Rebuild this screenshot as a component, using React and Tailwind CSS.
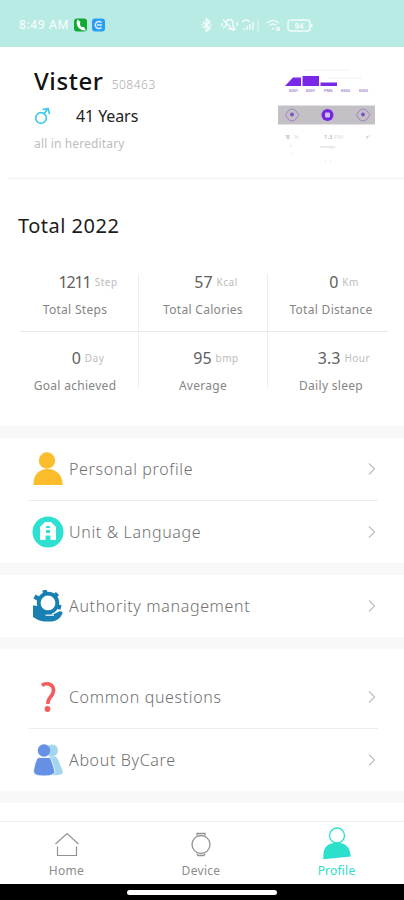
import React from "react";

const stats = [
  { value: "1211", unit: "Step", label: "Total Steps" },
  { value: "57", unit: "Kcal", label: "Total Calories" },
  { value: "0", unit: "Km", label: "Total Distance" },
  { value: "0", unit: "Day", label: "Goal achieved" },
  { value: "95", unit: "bmp", label: "Average" },
  { value: "3.3", unit: "Hour", label: "Daily sleep" },
];

const StatusBar = () => (
  <header className="flex h-[47px] shrink-0 items-center bg-[#b8ebe4] pt-[3px] pl-[19px] text-white">
    <span className="w-[54px] text-[12px] font-medium tracking-[0.600px] whitespace-nowrap opacity-90">8:49 AM</span>
    <svg className="ml-[1px] h-[14px] w-[13px]" viewBox="0 0 13 14">
      <rect width="13" height="13" y=".5" rx="3" fill="#12a934" />
      <path d="M3.500 1.500C1 6 4.500 13 12 12.500L10 9C7 9.500 5 7 6.500 4Z" fill="#fff" />
    </svg>
    <svg className="ml-[5px] h-[14px] w-[13px]" viewBox="0 0 13 14">
      <rect width="13" height="13" y=".5" rx="3" fill="#2c9cf5" />
      <path d="M9.500 4.500A3.600 3.600 0 1 0 9.500 9.500M5 7H10" stroke="#d8efff" strokeWidth="1.500" fill="none" />
    </svg>
    <svg className="ml-[95px] h-[16px] w-[114px] opacity-80" viewBox="0 0 114 16" fill="none" stroke="#fff" strokeWidth="1.500">
      <path d="M3 5L10 11L6.500 14V2L10 5L3 11M1.500 8H2.500M10.500 8H11.500" strokeWidth="1.800" />
      <path d="M23 11L26 9V6Q26 3 29 2.500Q33 2.500 33 6V9L35 12H28M23 2.500L34 14M22 6V9M37 5V9" />
      <path d="M42 5Q46 1 50 5M44 13V11M47 13V9M50 13V7M53 13V5" />
      <path d="M58 2V14" strokeWidth=".8" />
      <path d="M67 6Q73 1 79 6M69.500 8.500Q73 5.500 76.500 8.500M72 11L73 12L74 11M77 10V14M79 10V14" />
      <rect x="88" y="3" width="22" height="11" rx="3" />
      <path d="M111.500 7V10" strokeWidth="2" />
      <text x="99" y="11.500" fill="#fff" stroke="none" textAnchor="middle" className="text-[8px] font-bold">94</text>
    </svg>
  </header>
);

// Round thumbnail with a sleep chart and a row of watch controls
const Avatar = () => (
  <svg className="h-[112px] w-[100px]" viewBox="276 57 100 112">
    <path d="M305 70H350M328 78H362" stroke="#f1f0f2" />
    <path d="M285 86L293 77.500H301V86ZM302.500 76H319V86H302.500ZM320.500 82.500H337V86H320.500Z" fill="#7928e8" />
    <g fill="#a98cce" className="text-[4px] font-bold">
      <text x="289" y="92">6001</text>
      <text x="306" y="92">6001</text>
      <text x="324" y="92">PM6</text>
      <text x="341" y="92">6002</text>
      <text x="359" y="92">6003</text>
    </g>
    <rect x="278" y="105.500" width="97" height="19" fill="#c3c1c5" />
    <g fill="none" stroke="#9b80c4" strokeWidth=".9">
      <path d="M285.500 115L288 111Q292 107 296 111L299 115L296 119Q292 123 288 119Z" />
      <path d="M356.500 115L359 111Q363 107 367 111L370 115L367 119Q363 123 359 119Z" />
    </g>
    <circle cx="292" cy="114.500" r="2" fill="#8055bd" />
    <circle cx="363" cy="114.500" r="2" fill="#8055bd" />
    <circle cx="327.500" cy="115" r="6" fill="#7426e3" />
    <rect x="325" y="112.500" width="5" height="5" rx="1" fill="#d2c0ec" />
    <g fill="#aaa" className="text-[6px]">
      <text x="285" y="139">'8</text>
      <text x="294" y="139" fill="#ddd">%</text>
      <text x="324" y="139">1.3</text>
      <text x="334" y="139" fill="#ddd">PM</text>
      <text x="366" y="139">r'</text>
    </g>
    <text x="320" y="148" fill="#ccc" className="text-[4px]">average</text>
    <path d="M291 145V147M292 153V154M325 161H326M330 161H331" stroke="#ddd" />
  </svg>
);

const Stat = ({ value, unit, label }) => (
  <div className="flex flex-col items-center">
    <div className="flex h-[24px] items-center gap-[4px] pl-[26px]">
      <span className={`text-[16px] text-[#606060] ${value.length > 3 ? "tracking-[-1.100px]" : ""}`}>{value}</span>
      <span className="text-[10px] tracking-[0.500px] text-[#bcbcbc]">{unit}</span>
    </div>
    <span className="mt-[7px] text-[12px] leading-[18px] tracking-[0.300px] whitespace-nowrap text-[#858585]">{label}</span>
  </div>
);

const Row = ({ icon, label }) => (
  <div className="flex h-[62px] shrink-0 items-center pr-[28px] pl-[32px]">
    <span className="flex w-[37px] shrink-0">{icon}</span>
    <span className="text-[16px] font-light tracking-[0.650px] whitespace-nowrap text-[#707070]">{label}</span>
    <svg className="ml-auto h-[12px] w-[8px]" viewBox="0 0 8 12" fill="none" stroke="#bfbfbf" strokeWidth="1.200">
      <path d="M1 .5L6.500 6L1 11.500" />
    </svg>
  </div>
);

const Divider = () => <div className="mr-[26px] ml-[29px] h-px bg-[#ededed]" />;

const Band = () => <div className="h-[12px] bg-[#f8f8f8]" />;

const PersonIcon = () => (
  <svg className="h-[34px] w-[32px]" viewBox="0 0 32 34" fill="#fbbd2c">
    <circle cx="15" cy="8.500" r="8.200" />
    <path d="M1.500 33C1 23 7 17 15.500 17S31 23 30.500 33Z" />
  </svg>
);

const UnitIcon = () => (
  <svg className="h-[32px] w-[32px]" viewBox="0 0 32 32">
    <circle cx="16" cy="16" r="15.500" fill="#2de0d0" />
    <path d="M8 11L13 6H19L24 11V24H18.500V19.500H13.500V24H8Z" fill="#fff" />
    <path d="M14 10H18V12H14ZM14 14H18V17H14Z" fill="#2de0d0" />
  </svg>
);

const AuthorityIcon = () => (
  <svg className="h-[32px] w-[32px]" viewBox="0 0 32 32">
    <g stroke="#1880b2" fill="none">
      <circle cx="16" cy="13" r="9.300" strokeWidth="3.800" />
      <path d="M12.500 0L13.500 4M25.500 3.500L22.500 6.500M25 16.500L29 17.500M2.500 6.500L7 9" strokeWidth="4.500" />
    </g>
    <path d="M1 15.500Q6 15 9.500 18L12.500 20.500H19Q21.500 22.500 19 24.500H21L27 21.500Q31 20.500 30.500 23.500Q27 31 20 31.500H12Q7 31 1 27Z" fill="#1880b2" />
    <path d="M13.500 25.200H22" stroke="#fff" strokeWidth="1.200" />
  </svg>
);

const QuestionIcon = () => (
  <svg className="h-[32px] w-[32px]" viewBox="0 0 32 32">
    <path d="M10 4.500Q13 2 17 3Q23 5 21 12C19 17 15.500 17 16 23" fill="none" stroke="#f25c5c" strokeWidth="3.600" />
    <circle cx="15.500" cy="28" r="2.900" fill="#f25c5c" />
  </svg>
);

const AboutIcon = () => (
  <svg className="h-[34px] w-[32px]" viewBox="0 0 32 34">
    <circle cx="20" cy="7.500" r="6" fill="#a3d5ec" />
    <path d="M17 13.500H24Q27 17 28 22Q32 29 30 31Q26 33 19 32Z" fill="#a3d5ec" />
    <path d="M6 14.500H18Q20 17 23 29Q22 33 12 33Q1 33 1.500 28Q3 18 6 14.500Z" fill="#6590e6" stroke="#fff" strokeWidth=".8" />
    <circle cx="12" cy="7.500" r="6.200" fill="#6590e6" />
  </svg>
);

const App = () => {
  return (
    <div className="flex h-[900px] w-[404px] flex-col overflow-hidden bg-white font-['Noto_Sans',sans-serif]">
      <StatusBar />

      <section className="flex h-[130px] shrink-0 justify-between pr-[28px] pl-[34px]">
        <div className="flex flex-col pt-[15px]">
          <div className="flex h-[38px] items-center gap-[8px]">
            <h1 className="text-[24px] font-medium tracking-[0.600px] text-[#111]">Vister</h1>
            <span className="pt-[8px] text-[12px] font-light tracking-[0.500px] text-[#adadad]">508463</span>
          </div>
          <div className="flex h-[32px] items-center">
            <svg className="h-[18px] w-[18px]" viewBox="0 0 18 18" fill="none" stroke="#3acbea" strokeWidth="1.700">
              <circle cx="7" cy="11" r="5.300" />
              <path d="M10 7L13 2.500M8.500 2.500L14 1.500L15.500 7" />
            </svg>
            <span className="ml-[24px] text-[16px] tracking-[-0.100px] text-[#222]">41 Years</span>
          </div>
          <span className="text-[12px] leading-[24px] tracking-[0.150px] text-[#bdbdbd]">all in hereditary</span>
        </div>
        <div className="pt-[10px]">
          <Avatar />
        </div>
      </section>
      <div className="ml-[8px] h-[3px] shrink-0 bg-[#f9f9f9]" />

      <section className="h-[246px] shrink-0 pt-[31px]">
        <h2 className="pl-[18px] text-[20px] leading-[30px] tracking-[0.500px] text-[#1c1c1c]">Total 2022</h2>
        <div className="mt-[33px] mr-[16px] ml-[20px] grid grid-cols-[118px_1px_128px_1px_120px]">
          <div className="-mt-[4px] h-[61px] pr-[8px]">
            <Stat {...stats[0]} />
          </div>
          <div className="row-span-3 h-[115px] bg-[#eee]" />
          <div className="-mt-[4px]">
            <Stat {...stats[1]} />
          </div>
          <div className="row-span-3 h-[115px] bg-[#eee]" />
          <div className="-mt-[4px] pl-[6px]">
            <Stat {...stats[2]} />
          </div>
          <div className="h-px bg-[#eaeaea]" />
          <div className="h-px bg-[#eaeaea]" />
          <div className="h-px bg-[#eaeaea]" />
          <div className="pt-[14px] pr-[8px]">
            <Stat {...stats[3]} />
          </div>
          <div className="pt-[14px]">
            <Stat {...stats[4]} />
          </div>
          <div className="pt-[14px] pl-[6px]">
            <Stat {...stats[5]} />
          </div>
        </div>
      </section>

      <Band />
      <Row icon={<PersonIcon />} label="Personal profile" />
      <Divider />
      <Row icon={<UnitIcon />} label="Unit &amp; Language" />
      <Band />
      <Row icon={<AuthorityIcon />} label="Authority management" />
      <Band />
      <div className="pt-[17px]">
        <Row icon={<QuestionIcon />} label="Common questions" />
      </div>
      <Divider />
      <Row icon={<AboutIcon />} label="About ByCare" />
      <Band />

      <nav className="mt-auto flex h-[63px] shrink-0 border-t border-[#eee] text-[12px] leading-[16px] tracking-[0.300px] text-[#8c8c8c]">
        <div className="flex w-[133px] flex-col items-center pt-[8px]">
          <svg className="h-[30px] w-[28px]" viewBox="0 0 28 30" fill="none" stroke="#929292" strokeWidth="1.200">
            <path d="M2.500 14L14 3.500L25.500 14M4.500 16.500V25.500H23.500V16.500" />
          </svg>
          <span className="mt-[3px]">Home</span>
        </div>
        <div className="flex w-[136px] flex-col items-center pt-[8px]">
          <svg className="h-[30px] w-[28px]" viewBox="0 0 28 30" fill="none" stroke="#929292" strokeWidth="1.300">
            <circle cx="14" cy="14.500" r="9" />
            <path d="M10 5.500V3.500H18V5.500M10 23.500L11 25.500H17L18 23.500" />
          </svg>
          <span className="mt-[3px]">Device</span>
        </div>
        <div className="flex w-[135px] flex-col items-center pt-[4px] text-[#2de0cc]">
          <svg className="h-[34px] w-[28px]" viewBox="0 0 28 34" fill="none" stroke="#2de0cc" strokeWidth="1.300">
            <circle cx="14" cy="9.500" r="7.500" />
            <path d="M1 32.500V28Q2 17.500 14 17.500Q26 17.500 27 30Z" fill="#2de0cc" />
          </svg>
          <span className="mt-[3px] tracking-[0.200px]">Profile</span>
        </div>
      </nav>
      <div className="flex h-[16px] shrink-0 items-center justify-center bg-black">
        <div className="h-[5px] w-[150px] rounded-full bg-white" />
      </div>
    </div>
  );
};

export default App;
